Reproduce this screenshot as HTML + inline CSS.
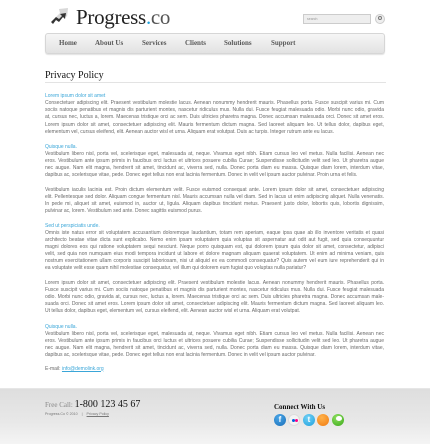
<!DOCTYPE html>
<html><head><meta charset="utf-8"><style>
*{margin:0;padding:0;box-sizing:border-box}
body{width:430px;height:444px;overflow:hidden;background:#fff;font-family:"Liberation Sans",sans-serif;position:relative}
.abs{position:absolute}
.serif{font-family:"Liberation Serif",serif}
.nav{left:45px;top:33px;width:340px;height:21px;border-radius:3px;background:linear-gradient(#f6f6f6,#e2e2e2);border:1px solid #d6d6d6;box-shadow:0 1px 1px rgba(0,0,0,.12)}
.nav span{position:absolute;top:5px;font:7px "Liberation Serif",serif;color:#333;font-weight:bold;opacity:.8}
.blk{position:absolute;left:45px;width:339px;font-size:5px;line-height:7.15px;color:#6a6a6a}
.blk div{text-align:justify;text-align-last:justify;white-space:nowrap;overflow:hidden}
.blk div.l{text-align-last:left}
.h{color:#3aa6d8}
</style></head><body>
<svg class="abs" style="left:50px;top:7px" width="20" height="19" viewBox="0 0 20 19"><path d="M9 2 L18 1 L17 10 L14 7 L8 13 L5 11 L10 6 Z" fill="#d8d8d8"/><path d="M1 15 L6 10 L9 12 L12 9 L10 7 L16 6 L15 12 L13 10 L9 15 L6 13 L3 17 Z" fill="#333"/></svg>
<div class="abs serif" style="left:76px;top:5px;font-size:21px;color:#222;letter-spacing:-0.3px">Progress<span style="color:#1ea0db">.</span><span style="color:#555">co</span></div>
<div class="abs" style="left:303px;top:14px;width:68px;height:10px;background:#eee;border:1px solid #ccc;font-size:3.5px;color:#999;padding:2px 3px">search</div>
<div class="abs" style="left:375px;top:14px;width:10px;height:10px;border-radius:50%;background:#eee;border:1px solid #ccc"></div>
<div class="abs" style="left:378px;top:16px;width:4px;height:4px;border-radius:50%;border:1px solid #777"></div>
<div class="abs nav"><span style="left:13px">Home</span><span style="left:49px">About Us</span><span style="left:96px">Services</span><span style="left:139px">Clients</span><span style="left:178px">Solutions</span><span style="left:225px">Support</span></div>
<div class="abs serif" style="left:45px;top:70px;font-size:10px;color:#111">Privacy Policy</div>
<div class="abs" style="left:45px;top:82px;width:341px;height:1px;background:#e3e3e3"></div>

<div class="blk" style="top:93px"><div class="l h">Lorem ipsum dolor sit amet</div>
<div>Consectetuer adipiscing elit. Praesent vestibulum molestie lacus. Aenean nonummy hendrerit mauris. Phasellus porta. Fusce suscipit varius mi. Cum</div>
<div>sociis natoque penatibus et magnis dis parturient montes, nascetur ridiculus mus. Nulla dui. Fusce feugiat malesuada odio. Morbi nunc odio, gravida</div>
<div>at, cursus nec, luctus a, lorem. Maecenas tristique orci ac sem. Duis ultricies pharetra magna. Donec accumsan malesuada orci. Donec sit amet eros.</div>
<div>Lorem ipsum dolor sit amet, consectetuer adipiscing elit. Mauris fermentum dictum magna. Sed laoreet aliquam leo. Ut tellus dolor, dapibus eget,</div>
<div class="l">elementum vel, cursus eleifend, elit. Aenean auctor wisl et urna. Aliquam erat volutpat. Duis ac turpis. Integer rutrum ante eu lacus.</div></div>

<div class="blk" style="top:143.5px"><div class="l h">Quisque nulla.</div>
<div>Vestibulum libero nisl, porta vel, scelerisque eget, malesuada at, neque. Vivamus eget nibh. Etiam cursus leo vel metus. Nulla facilisi. Aenean nec</div>
<div>eros. Vestibulum ante ipsum primis in faucibus orci luctus et ultrices posuere cubilia Curae; Suspendisse sollicitudin velit sed leo. Ut pharetra augue</div>
<div>nec augue. Nam elit magna, hendrerit sit amet, tincidunt ac, viverra sed, nulla. Donec porta diam eu massa. Quisque diam lorem, interdum vitae,</div>
<div class="l">dapibus ac, scelerisque vitae, pede. Donec eget tellus non erat lacinia fermentum. Donec in velit vel ipsum auctor pulvinar. Proin urna et felis.</div></div>

<div class="blk" style="top:186.5px">
<div>Vestibulum iaculis lacinia est. Proin dictum elementum velit. Fusce euismod consequat ante. Lorem ipsum dolor sit amet, consectetuer adipiscing</div>
<div>elit. Pellentesque sed dolor. Aliquam congue fermentum nisl. Mauris accumsan nulla vel diam. Sed in lacus ut enim adipiscing aliquet. Nulla venenatis.</div>
<div>In pede mi, aliquet sit amet, euismod in, auctor ut, ligula. Aliquam dapibus tincidunt metus. Praesent justo dolor, lobortis quis, lobortis dignissim,</div>
<div class="l">pulvinar ac, lorem. Vestibulum sed ante. Donec sagittis euismod purus.</div></div>

<div class="blk" style="top:222.5px"><div class="l h">Sed ut perspiciatis unde.</div>
<div>Omnis iste natus error sit voluptatem accusantium doloremque laudantium, totam rem aperiam, eaque ipsa quae ab illo inventore veritatis et quasi</div>
<div>architecto beatae vitae dicta sunt explicabo. Nemo enim ipsam voluptatem quia voluptas sit aspernatur aut odit aut fugit, sed quia consequuntur</div>
<div>magni dolores eos qui ratione voluptatem sequi nesciunt. Neque porro quisquam est, qui dolorem ipsum quia dolor sit amet, consectetur, adipisci</div>
<div>velit, sed quia non numquam eius modi tempora incidunt ut labore et dolore magnam aliquam quaerat voluptatem. Ut enim ad minima veniam, quis</div>
<div>nostrum exercitationem ullam corporis suscipit laboriosam, nisi ut aliquid ex ea commodi consequatur? Quis autem vel eum iure reprehenderit qui in</div>
<div class="l">ea voluptate velit esse quam nihil molestiae consequatur, vel illum qui dolorem eum fugiat quo voluptas nulla pariatur?</div></div>

<div class="blk" style="top:279.5px">
<div>Lorem ipsum dolor sit amet, consectetuer adipiscing elit. Praesent vestibulum molestie lacus. Aenean nonummy hendrerit mauris. Phasellus porta.</div>
<div>Fusce suscipit varius mi. Cum sociis natoque penatibus et magnis dis parturient montes, nascetur ridiculus mus. Nulla dui. Fusce feugiat malesuada</div>
<div>odio. Morbi nunc odio, gravida at, cursus nec, luctus a, lorem. Maecenas tristique orci ac sem. Duis ultricies pharetra magna. Donec accumsan male-</div>
<div>suada orci. Donec sit amet eros. Lorem ipsum dolor sit amet, consectetuer adipiscing elit. Mauris fermentum dictum magna. Sed laoreet aliquam leo.</div>
<div class="l">Ut tellus dolor, dapibus eget, elementum vel, cursus eleifend, elit. Aenean auctor wisl et urna. Aliquam erat volutpat.</div></div>

<div class="blk" style="top:323.5px"><div class="l h">Quisque nulla.</div>
<div>Vestibulum libero nisl, porta vel, scelerisque eget, malesuada at, neque. Vivamus eget nibh. Etiam cursus leo vel metus. Nulla facilisi. Aenean nec</div>
<div>eros. Vestibulum ante ipsum primis in faucibus orci luctus et ultrices posuere cubilia Curae; Suspendisse sollicitudin velit sed leo. Ut pharetra augue</div>
<div>nec augue. Nam elit magna, hendrerit sit amet, tincidunt ac, viverra sed, nulla. Donec porta diam eu massa. Quisque diam lorem, interdum vitae,</div>
<div class="l">dapibus ac, scelerisque vitae, pede. Donec eget tellus non erat lacinia fermentum. Donec in velit vel ipsum auctor pulvinar.</div></div>

<div class="blk" style="top:365.5px"><div class="l">E-mail: <span class="h" style="text-decoration:underline">info@demolink.org</span></div></div>

<div class="abs" style="left:0;top:388px;width:430px;height:56px;background:linear-gradient(#dedede,#e8e8e8 60%,#f4f4f4);border-top:1px solid #e6e6e6"></div>
<div class="abs serif" style="left:45px;top:399px;font-size:7px;color:#888">Free Call: <span style="font-size:10px;color:#111">1-800 123 45 67</span></div>
<div class="abs" style="left:45px;top:412px;font-size:3.6px;color:#777">Progress.Co &copy; 2010 &nbsp;&nbsp; | &nbsp;&nbsp; <span style="text-decoration:underline">Privacy Policy</span></div>
<div class="abs serif" style="left:274px;top:403px;font-size:7px;color:#111;font-weight:bold">Connect With Us</div>
<div class="abs" style="left:274px;top:414px;width:12px;height:12px;border-radius:50%;background:radial-gradient(circle at 40% 30%,#4aa6e8,#1a6fb8);color:#fff;font:bold 8px 'Liberation Sans';text-align:center;line-height:12px">f</div>
<div class="abs" style="left:288px;top:414px;width:12px;height:12px;border-radius:50%;background:#f4f4f4;border:1px solid #ddd"><span class="abs" style="left:3px;top:4px;width:3px;height:3px;border-radius:50%;background:#0063dc"></span><span class="abs" style="left:6px;top:4px;width:3px;height:3px;border-radius:50%;background:#ff0084"></span></div>
<div class="abs" style="left:303px;top:414px;width:12px;height:12px;border-radius:50%;background:radial-gradient(circle at 40% 30%,#6fd0f5,#1fa0dd);color:#fff;font:bold 8px 'Liberation Sans';text-align:center;line-height:12px">t</div>
<div class="abs" style="left:317px;top:414px;width:12px;height:12px;border-radius:50%;background:radial-gradient(circle at 40% 30%,#ffb24a,#f07a10)"></div>
<div class="abs" style="left:332px;top:414px;width:12px;height:12px;border-radius:50%;background:radial-gradient(circle at 40% 30%,#8ee060,#3aa818)"><span class="abs" style="left:4px;top:2px;width:6px;height:5px;border-radius:50%;background:#fff"></span></div>
</body></html>
